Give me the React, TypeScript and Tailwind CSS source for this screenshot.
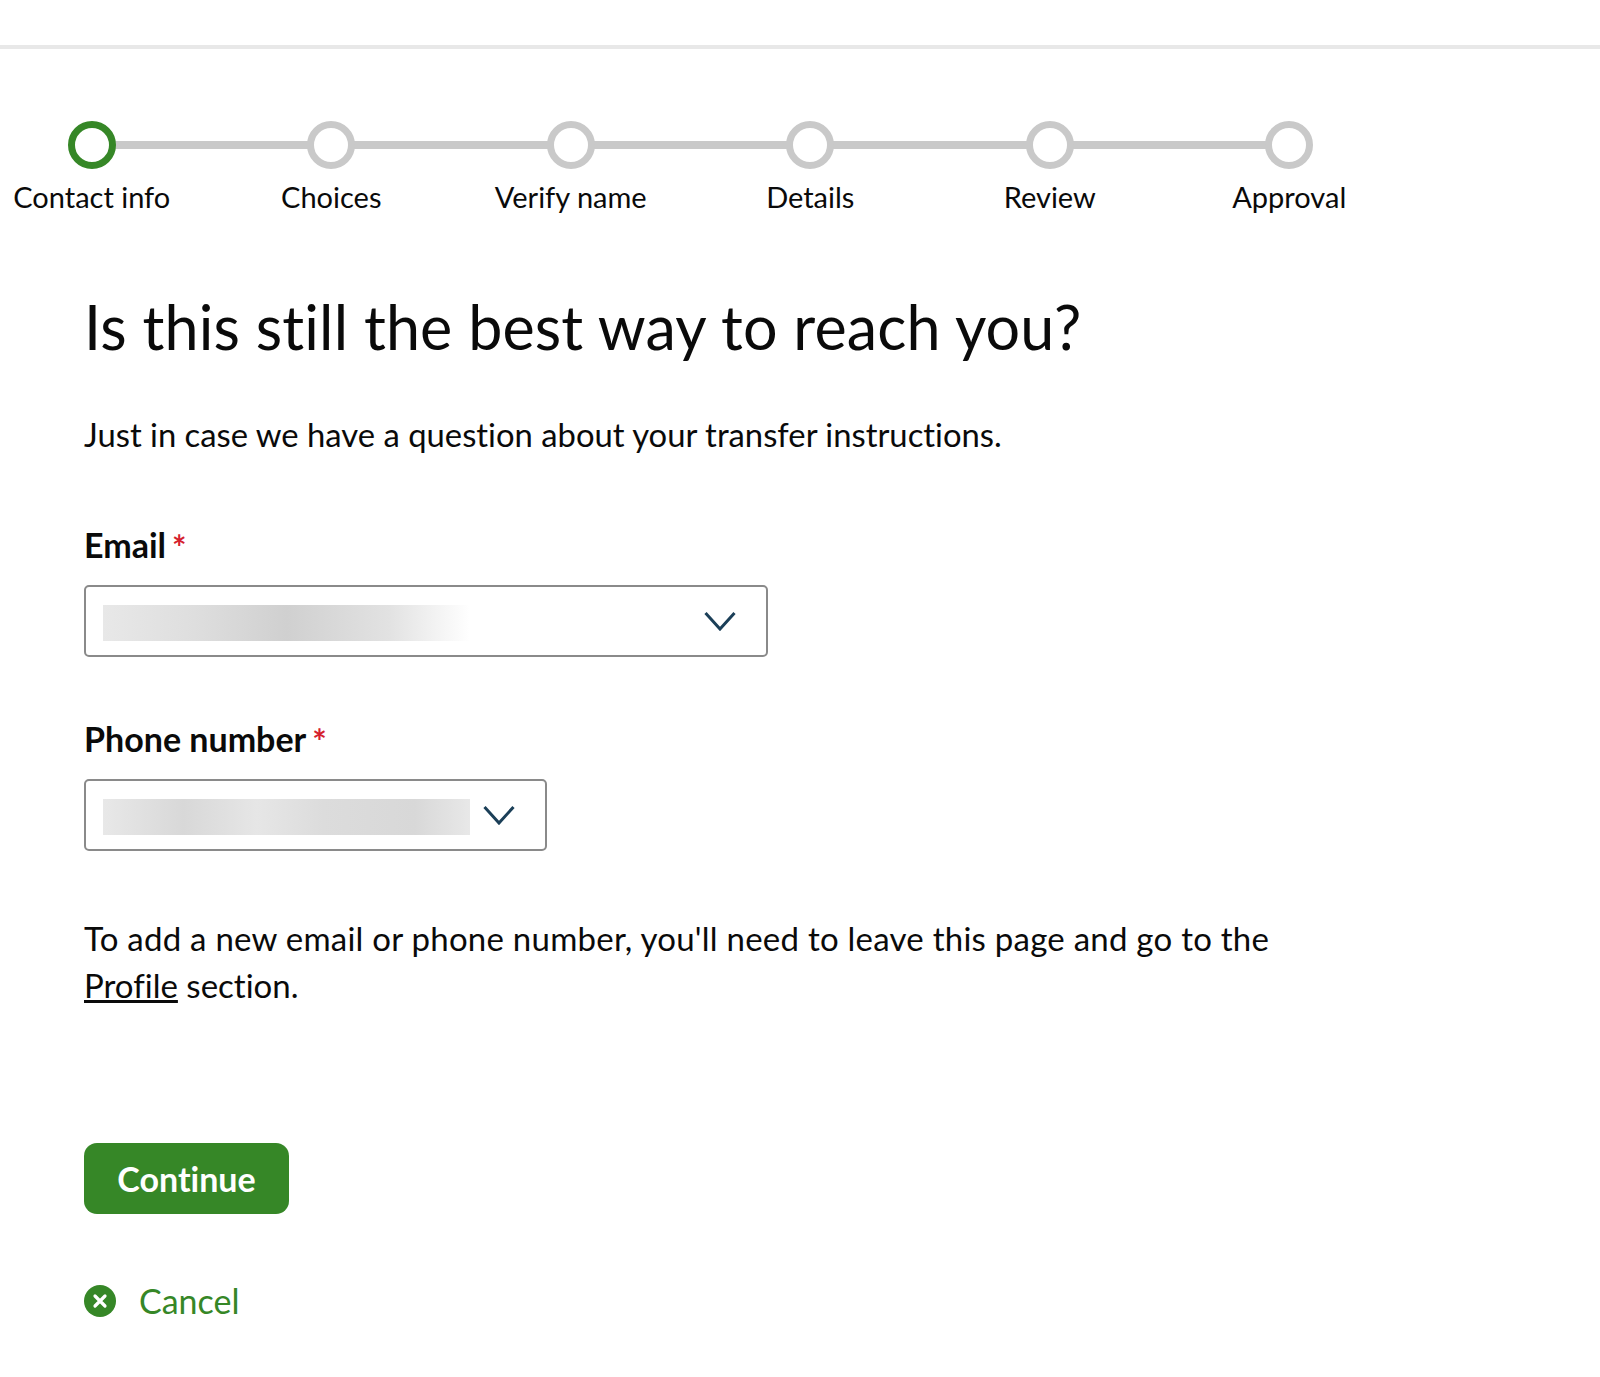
const STEPS = ['Contact info', 'Choices', 'Verify name', 'Details', 'Review', 'Approval']

function Stepper() {
  return (
    <div className="relative ml-[-28px] flex w-[1437px]">
      {/* connector behind the circles */}
      <div className="absolute left-[120px] top-[20px] h-2 w-[1198px] bg-[#c9c9c9]" />
      {STEPS.map((label, i) => (
        <div key={label} className="relative flex w-[239.6px] flex-col items-center">
          <div
            className={`h-12 w-12 rounded-full border-[7px] bg-white ${
              i === 0 ? 'border-[#368727]' : 'border-[#c9c9c9]'
            }`}
          />
          <span className="mt-[8px] whitespace-nowrap text-[29px] leading-[40px] text-[#0a0a0a]">{label}</span>
        </div>
      ))}
    </div>
  )
}

function Field({ label, width, shades }: { label: string; width: string; shades: string }) {
  return (
    <div>
      <div className="flex items-start text-[34px] font-bold leading-[40px] text-[#0a0a0a]">
        {label}
        <span className="ml-[6px] mt-[2px] text-[34px] font-bold leading-[40px] text-[#d5212e]">*</span>
      </div>
      <div
        className={`mt-[18px] flex h-[72px] items-center justify-between rounded-[5px] border-2 border-[#8a8a8a] pl-[17px] pr-[30px] ${width}`}
      >
        <div className={`mt-[4px] h-9 w-[367px] ${shades}`} />
        <svg width="32" height="20" viewBox="0 0 32 20" fill="none" className="shrink-0">
          <path d="M1.5 2L16 18L30.5 2" stroke="#1b3f58" strokeWidth="3" />
        </svg>
      </div>
    </div>
  )
}

export default function App() {
  return (
    <div className="min-h-[1377px] bg-white font-['Lato','Open_Sans',sans-serif] [font-variant-ligatures:none]">
      <div className="h-[49px] border-b-[4px] border-[#e8e8e8]" />

      <div className="pt-[72px]">
        <Stepper />

        <div className="pl-[84px]">
          <h1 className="mt-[75px] text-[61px] font-normal leading-[70px] tracking-[0.13px] text-[#0a0a0a]">
            Is this still the best way to reach you?
          </h1>

          <p className="mt-[50px] text-[32.8px] leading-[46px] text-[#0a0a0a]">
            Just in case we have a question about your transfer instructions.
          </p>

          <div className="mt-[67px] flex flex-col gap-[62px]">
            <Field
              label="Email"
              width="w-[684px]"
              shades="bg-[linear-gradient(90deg,#e8e8e8,#dedede_25%,#d0d0d0_50%,#e2e2e2_78%,#ffffff)]"
            />
            <Field
              label="Phone number"
              width="w-[463px]"
              shades="bg-[linear-gradient(90deg,#e8e8e8,#d8d8d8_22%,#e6e6e6_42%,#dcdcdc_60%,#d8d8d8_85%,#e8e8e8)]"
            />
          </div>

          <p className="mt-[64px] w-[1240px] text-[33px] leading-[47px] text-[#0a0a0a]">
            <span className="tracking-[0.24px]">
              To add a new email or phone number, you'll need to leave this page and go to the
            </span>
            <br />
            <a className="underline">Profile</a> section.
          </p>

          <button className="mt-[134px] block h-[71px] w-[205px] rounded-[13px] bg-[#368727] text-[34px] font-bold text-white">
            Continue
          </button>

          <div className="mt-[67px] flex items-center gap-[23px] text-[34px] leading-[40px] text-[#368727]">
            <svg width="32" height="32" viewBox="0 0 32 32">
              <circle cx="16" cy="16" r="16" fill="#368727" />
              <path d="M11 11l10 10M21 11L11 21" stroke="#fff" strokeWidth="3.2" strokeLinecap="round" />
            </svg>
            Cancel
          </div>
        </div>
      </div>
    </div>
  )
}
